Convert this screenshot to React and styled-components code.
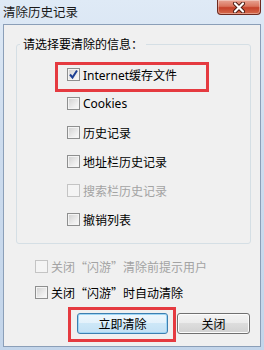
import React from "react";
import styled, { createGlobalStyle } from "styled-components";

const GlobalStyle = createGlobalStyle`
  html, body {
    margin: 0;
    padding: 0;
    width: 264px;
    height: 350px;
    overflow: hidden;
    font-family: "Noto Sans", "Noto Sans CJK SC", sans-serif;
  }
`;

const Check = ({ checked, disabled }) => (
  <Box $disabled={disabled}>
    {checked && (
      <svg width="11" height="11" viewBox="0 0 11 11">
        <path d="M2 5.5 L4.5 8.5 L9 1.5" fill="none" stroke="#1d3f93" strokeWidth="2" />
      </svg>
    )}
  </Box>
);

const App = () => {
  return (
    <Window>
      <GlobalStyle />
      <TitleBar>
        <Title>清除历史记录</Title>
        <CloseButton>
          <svg width="14" height="11" viewBox="0 0 14 11">
            <path d="M3 1.5 L11 9.5 M11 1.5 L3 9.5" stroke="#4a1a12" strokeWidth="4" strokeLinecap="round" />
            <path d="M3 1.5 L11 9.5 M11 1.5 L3 9.5" stroke="#ffffff" strokeWidth="2.2" strokeLinecap="round" />
          </svg>
        </CloseButton>
      </TitleBar>

      <Client>
        <Group>
          <Legend>请选择要清除的信息：</Legend>
          <List>
            {items.map(item => (
              <Row key={item.label} $disabled={item.disabled}>
                {item.marked && <Highlight />}
                <Check checked={item.checked} disabled={item.disabled} />
                <span>{item.label}</span>
              </Row>
            ))}
          </List>
        </Group>

        <Options>
          <Option $disabled>
            <Check disabled />
            <span>关闭“闪游”清除前提示用户</span>
          </Option>
          <Option>
            <Check />
            <span>关闭“闪游”时自动清除</span>
          </Option>
        </Options>

        <Buttons>
          <Button $primary $width={91}>
            <ButtonHighlight />
            立即清除
          </Button>
          <Button $width={73}>关闭</Button>
        </Buttons>
      </Client>
    </Window>
  );
};

export default App;

const items = [
  { label: "Internet缓存文件", checked: true, marked: true },
  { label: "Cookies" },
  { label: "历史记录" },
  { label: "地址栏历史记录" },
  { label: "搜索栏历史记录", disabled: true },
  { label: "撤销列表" }
];

const Window = styled.div`
  width: 264px;
  height: 350px;
  box-sizing: border-box;
  display: flex;
  flex-direction: column;
  padding: 0 3px 3px 3px;
  background: linear-gradient(180deg, #dfeaf6 0%, #cddcee 40%, #c3d5ea 100%);
`;

const TitleBar = styled.div`
  height: 24px;
  display: flex;
  justify-content: space-between;
  align-items: flex-start;
  flex-shrink: 0;
`;

const Title = styled.div`
  font-family: "Noto Sans CJK SC", sans-serif;
  font-size: 12.5px;
  line-height: 23px;
  color: #1a1a1a;
`;

const CloseButton = styled.div`
  width: 44px;
  height: 15px;
  box-sizing: border-box;
  display: flex;
  align-items: center;
  justify-content: center;
  border: 1px solid #6d2a1f;
  border-top: none;
  border-radius: 0 0 4px 4px;
  background: linear-gradient(180deg, #e8a494 0%, #d9745d 45%, #c5412a 55%, #d56a4c 100%);
  box-shadow: inset 0 0 0 1px rgba(255, 255, 255, 0.35);
`;

const Client = styled.div`
  flex: 1;
  display: flex;
  flex-direction: column;
  background: #f0f0f0;
  border: 1px solid #8b9fb8;
  padding: 0 9px 0 12px;
`;

const Group = styled.fieldset`
  margin: 11px 0 0 0;
  padding: 8px 0 9px 0;
  border: 1px solid #d5dfe5;
  border-radius: 3px;
  min-width: 0;
`;

const Legend = styled.legend`
  font-family: "Noto Sans CJK SC", sans-serif;
  font-size: 12px;
  line-height: 16px;
  padding: 0 3px;
  margin-left: 3px;
  color: #000;
`;

const List = styled.div`
  display: flex;
  flex-direction: column;
  padding-left: 50px;
`;

const Row = styled.div`
  position: relative;
  height: 29px;
  display: flex;
  align-items: center;
  gap: 3px;
  font-family: "Noto Sans", "Noto Sans CJK SC", sans-serif;
  font-size: 12px;
  color: ${p => (p.$disabled ? "#a3a3a3" : "#000")};
`;

const Highlight = styled.div`
  position: absolute;
  left: -12px;
  top: 2px;
  width: 154px;
  height: 30px;
  box-sizing: border-box;
  border: 3px solid #e53a40;
  pointer-events: none;
`;

const Box = styled.span`
  width: 13px;
  height: 13px;
  box-sizing: border-box;
  flex-shrink: 0;
  display: flex;
  align-items: center;
  justify-content: center;
  border: 1px solid ${p => (p.$disabled ? "#c4c4c4" : "#8e8f8f")};
  background: ${p =>
    p.$disabled
      ? "#f4f4f4"
      : "linear-gradient(135deg, #cfcfcf 0%, #ececec 60%, #fbfbfb 100%)"};
  box-shadow: inset 0 0 0 1px #f4f4f4;
`;

const Options = styled.div`
  margin-top: 9px;
  padding-left: 19px;
  display: flex;
  flex-direction: column;
`;

const Option = styled.div`
  height: 26px;
  display: flex;
  align-items: center;
  gap: 3px;
  font-family: "Noto Sans CJK SC", sans-serif;
  font-size: 12px;
  color: ${p => (p.$disabled ? "#a3a3a3" : "#000")};
`;

const Buttons = styled.div`
  margin-top: 8px;
  display: flex;
  justify-content: flex-end;
  gap: 9px;
  padding-right: 1px;
`;

const Button = styled.div`
  position: relative;
  width: ${p => p.$width}px;
  height: 21px;
  box-sizing: border-box;
  display: flex;
  align-items: center;
  justify-content: center;
  font-family: "Noto Sans CJK SC", sans-serif;
  font-size: 12px;
  color: #000;
  border-radius: 3px;
  border: 1px solid ${p => (p.$primary ? "#3c7fb1" : "#707070")};
  background: ${p =>
    p.$primary
      ? "linear-gradient(180deg, #eef7fd 0%, #e2f1fb 50%, #cde7f7 50%, #c3e1f5 100%)"
      : "linear-gradient(180deg, #f3f3f3 0%, #ebebeb 50%, #dddddd 50%, #d1d1d1 100%)"};
  box-shadow: inset 0 0 0 1px ${p => (p.$primary ? "#9fd6f5" : "#fcfcfc")};
`;

const ButtonHighlight = styled.div`
  position: absolute;
  left: -10px;
  top: -7px;
  width: 108px;
  height: 35px;
  box-sizing: border-box;
  border: 3px solid #e53a40;
  pointer-events: none;
`;
